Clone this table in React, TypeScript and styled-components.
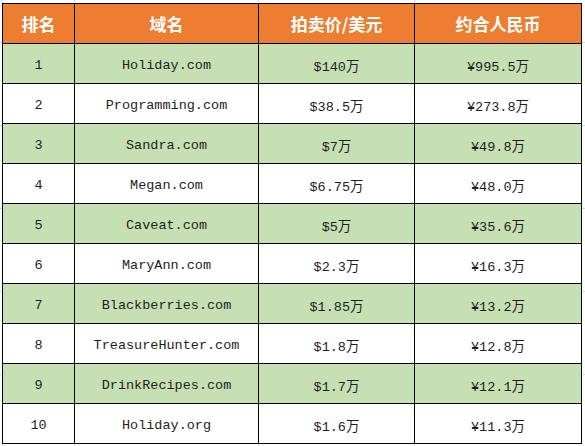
import React from "react";
import styled, { createGlobalStyle } from "styled-components";

const GlobalStyle = createGlobalStyle`
  html, body {
    margin: 0;
    padding: 0;
    background: #ffffff;
  }
`;

interface Row {
  rank: number;
  domain: string;
  usd: string;
  cny: string;
}

const rows: Row[] = [
  { rank: 1, domain: "Holiday.com", usd: "$140万", cny: "¥995.5万" },
  { rank: 2, domain: "Programming.com", usd: "$38.5万", cny: "¥273.8万" },
  { rank: 3, domain: "Sandra.com", usd: "$7万", cny: "¥49.8万" },
  { rank: 4, domain: "Megan.com", usd: "$6.75万", cny: "¥48.0万" },
  { rank: 5, domain: "Caveat.com", usd: "$5万", cny: "¥35.6万" },
  { rank: 6, domain: "MaryAnn.com", usd: "$2.3万", cny: "¥16.3万" },
  { rank: 7, domain: "Blackberries.com", usd: "$1.85万", cny: "¥13.2万" },
  { rank: 8, domain: "TreasureHunter.com", usd: "$1.8万", cny: "¥12.8万" },
  { rank: 9, domain: "DrinkRecipes.com", usd: "$1.7万", cny: "¥12.1万" },
  { rank: 10, domain: "Holiday.org", usd: "$1.6万", cny: "¥11.3万" },
];

const widths = [72, 184, 156, 167];

// faint spreadsheet gridlines peeking out around the table
const grid = "#d6d6d6";

const Sheet = styled.div`
  width: 585px;
  height: 446px;
  padding: 3px 0 0 2px;
  box-sizing: border-box;
  overflow: hidden;
  background:
    linear-gradient(${grid}, ${grid}) 74px 0 / 1px 100% no-repeat,
    linear-gradient(${grid}, ${grid}) 258px 0 / 1px 100% no-repeat,
    linear-gradient(${grid}, ${grid}) 414px 0 / 1px 100% no-repeat,
    linear-gradient(${grid}, ${grid}) 2px 0 / 1px 100% no-repeat,
    repeating-linear-gradient(
        to bottom,
        transparent 0 42px,
        ${grid} 42px 43px,
        transparent 43px 83px
      )
      0 0 / 100% 100% no-repeat,
    #ffffff;
`;

const Table = styled.table`
  border-collapse: collapse;
  table-layout: fixed;
  width: ${widths.reduce((a, b) => a + b, 0)}px;
`;

const HeadCell = styled.th`
  height: 40px;
  padding: 0;
  box-sizing: border-box;
  background: #ed7d31;
  color: #ffffff;
  border: 1.5px solid #000000;
  font-family: "Noto Sans CJK SC", "Noto Sans", sans-serif;
  font-size: 17px;
  font-weight: 700;
  text-align: center;
  vertical-align: middle;
`;

const BodyRow = styled.tr<{ $shaded: boolean }>`
  background: ${(p) => (p.$shaded ? "#c6e0b4" : "#ffffff")};
`;

const Cell = styled.td`
  height: 40px;
  padding: 3px 0 0;
  box-sizing: border-box;
  border: 1.5px solid #000000;
  color: #1e1e1e;
  font-family: "Liberation Mono", "Noto Sans CJK SC", monospace;
  font-size: 13.5px;
  text-align: center;
  vertical-align: middle;
`;

export default function App() {
  return (
    <>
      <GlobalStyle />
      <Sheet>
        <Table>
          <colgroup>
            {widths.map((w, i) => (
              <col key={i} style={{ width: w }} />
            ))}
          </colgroup>
          <thead>
            <tr>
              <HeadCell>排名</HeadCell>
              <HeadCell>域名</HeadCell>
              <HeadCell>拍卖价/美元</HeadCell>
              <HeadCell>约合人民币</HeadCell>
            </tr>
          </thead>
          <tbody>
            {rows.map((r, i) => (
              <BodyRow key={r.rank} $shaded={i % 2 === 0}>
                <Cell>{r.rank}</Cell>
                <Cell>{r.domain}</Cell>
                <Cell>{r.usd}</Cell>
                <Cell>{r.cny}</Cell>
              </BodyRow>
            ))}
          </tbody>
        </Table>
      </Sheet>
    </>
  );
}
